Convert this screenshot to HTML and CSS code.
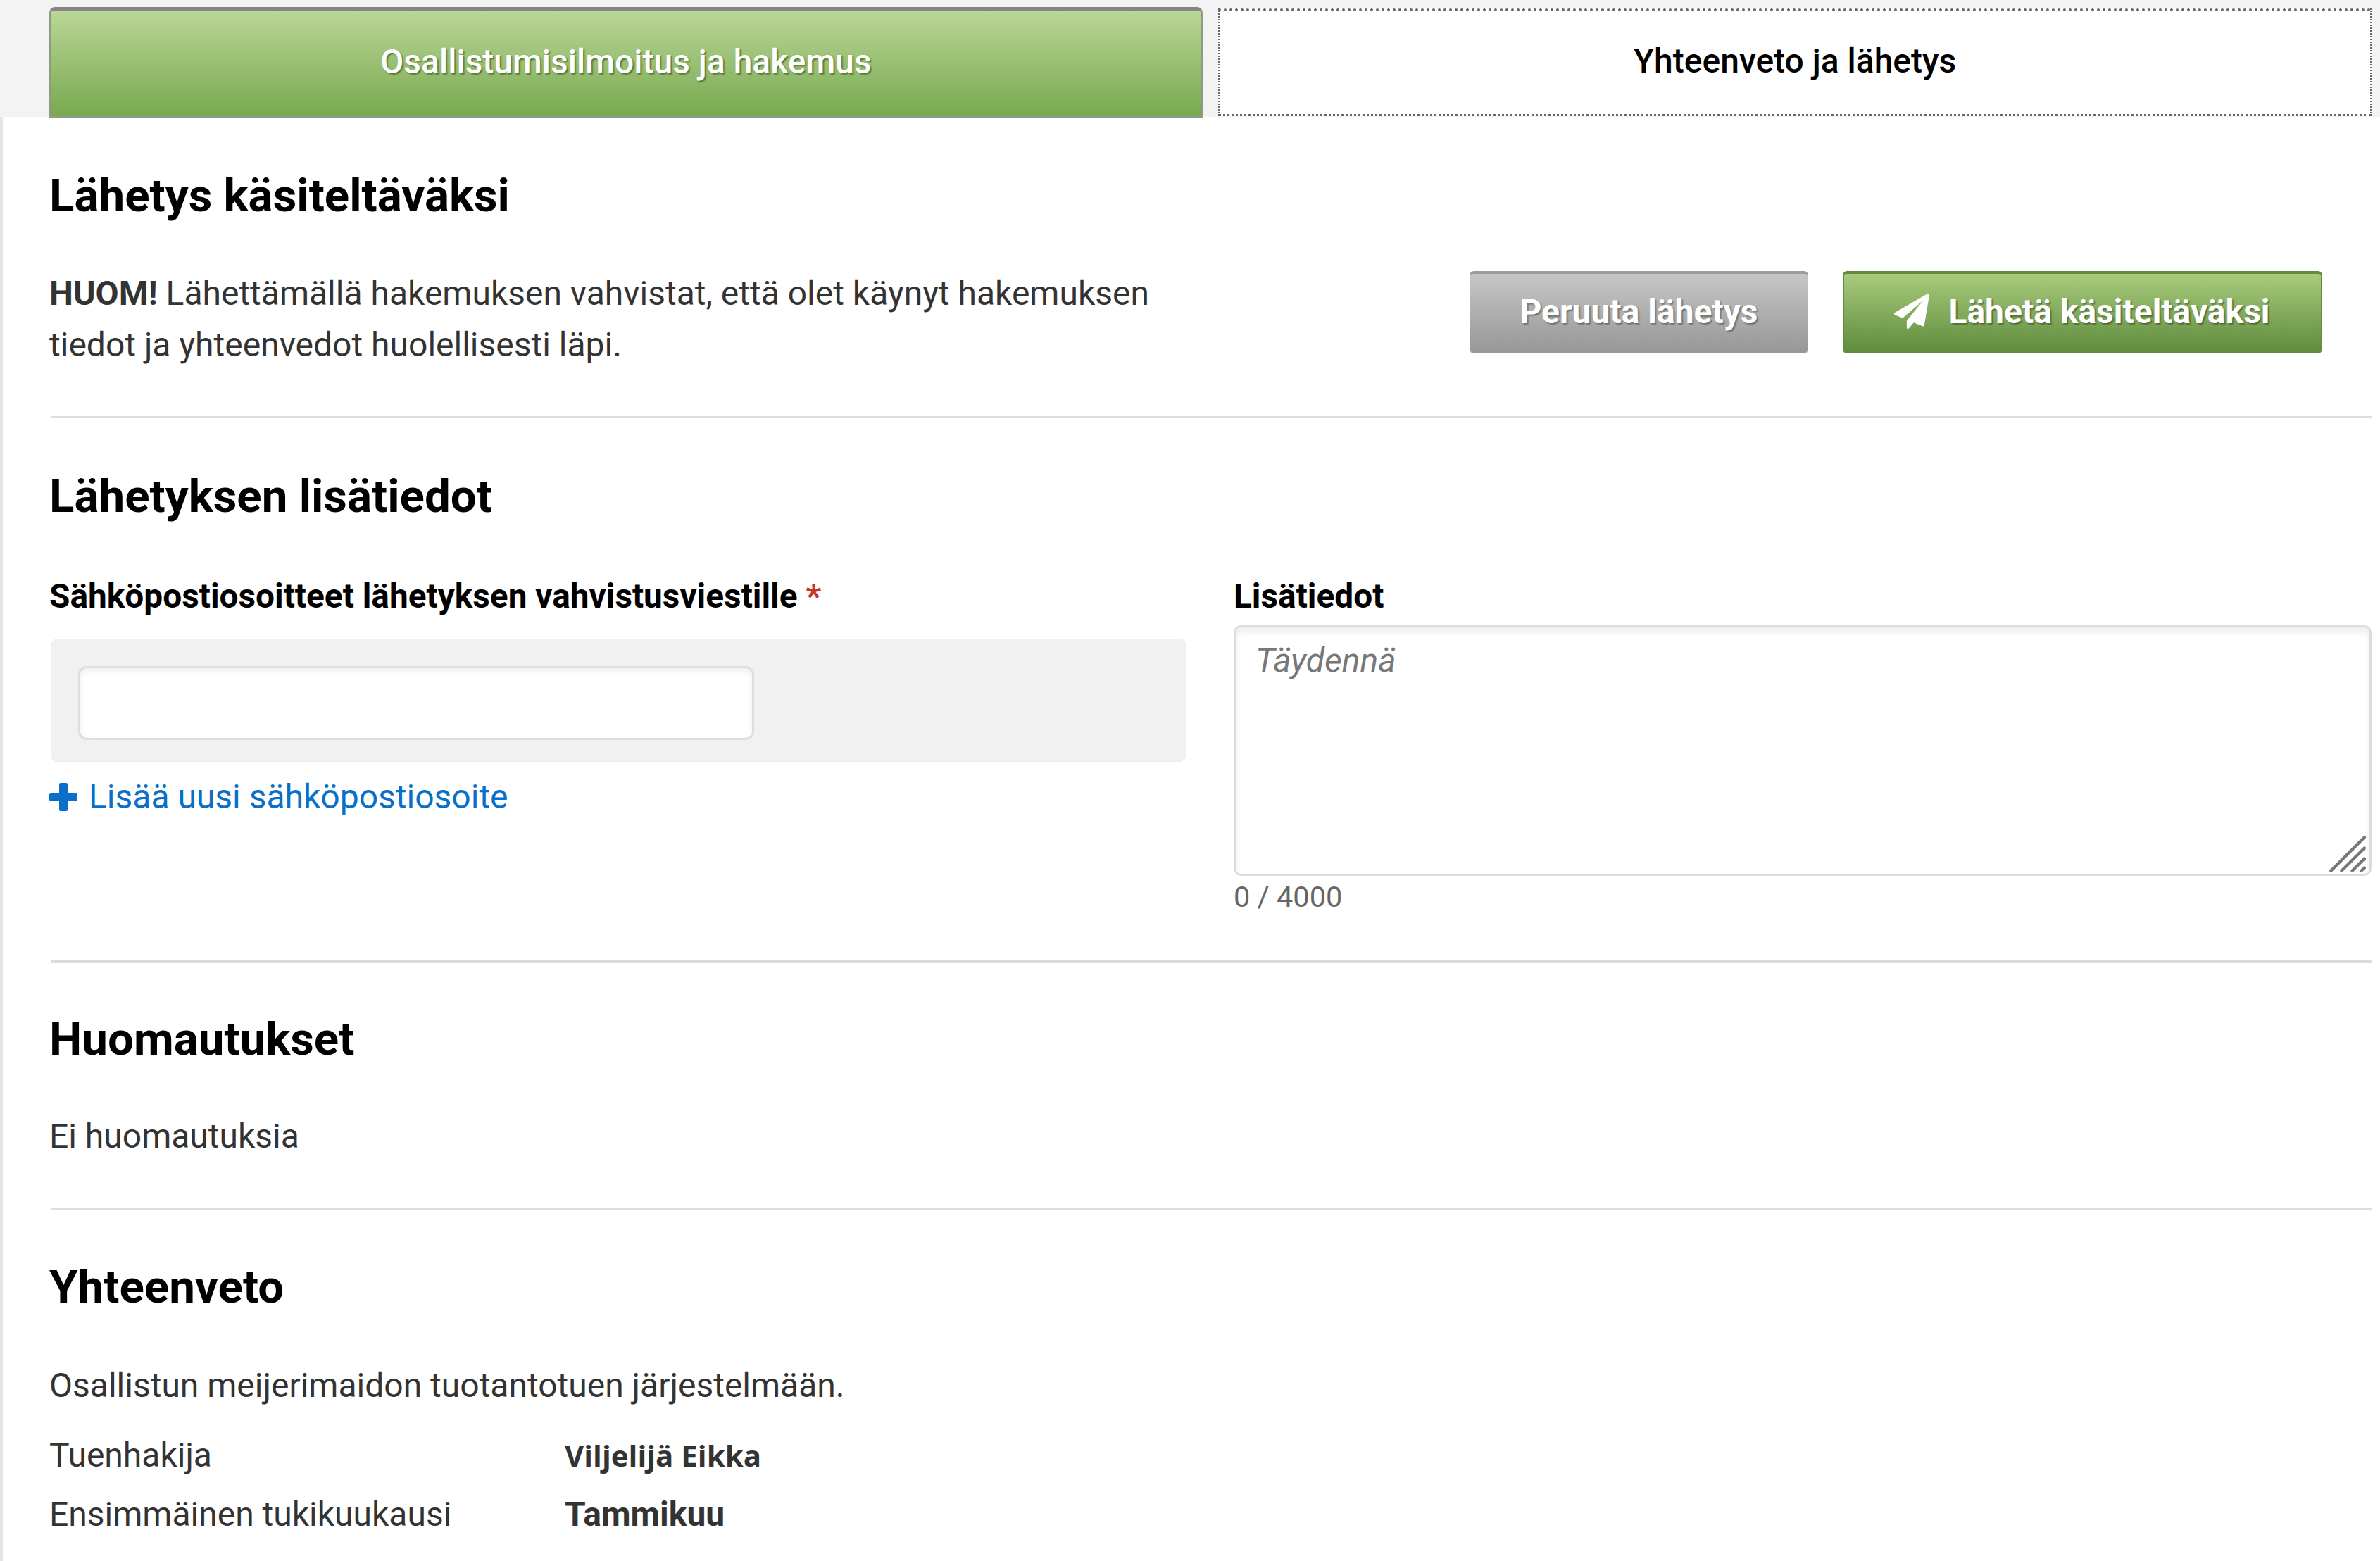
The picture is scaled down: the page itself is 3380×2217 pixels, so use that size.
FILE: index.html
```html
<!DOCTYPE html>
<html lang="fi">
<head>
<meta charset="utf-8">
<title>Lähetys käsiteltäväksi</title>
<link rel="stylesheet" href="styles.css">
</head>
<body>
<nav class="tabs">
  <a class="tab tab-active">Osallistumisilmoitus ja hakemus</a>
  <a class="tab tab-current">Yhteenveto ja lähetys</a>
</nav>
<main class="main">
  <section class="section section-send">
    <h2 class="heading">Lähetys käsiteltäväksi</h2>
    <div class="send-row">
      <p class="send-text"><strong>HUOM!</strong> Lähettämällä hakemuksen vahvistat, että olet käynyt hakemuksen tiedot ja yhteenvedot huolellisesti läpi.</p>
      <div class="actions">
        <button class="btn btn-grey" type="button">Peruuta lähetys</button>
        <button class="btn btn-green" type="button">
          <svg class="plane" viewBox="0 0 1792 1792" aria-hidden="true"><path d="M1764 11q33 24 27 64l-256 1536q-5 29-32 45-14 8-31 8-11 0-24-5l-453-185-242 295q-18 23-49 23-13 0-22-4-19-7-30.500-23.500t-11.500-36.500v-349l864-1059-1069 925-395-162q-37-14-40-55-2-40 32-59l1664-960q15-9 32-9 20 0 36 11z"/></svg>
          Lähetä käsiteltäväksi
        </button>
      </div>
    </div>
  </section>
  <section class="section section-info">
    <h2 class="heading">Lähetyksen lisätiedot</h2>
    <div class="form-grid">
      <div class="field">
        <label class="label label-left">Sähköpostiosoitteet lähetyksen vahvistusviestille <span class="req">*</span></label>
        <div class="panel"><input class="input" type="text"></div>
        <a class="add-link">
          <svg class="plus" viewBox="0 0 40 40" aria-hidden="true"><path d="M14 2a2 2 0 0 1 2-2h8a2 2 0 0 1 2 2v12h12a2 2 0 0 1 2 2v8a2 2 0 0 1-2 2H26v12a2 2 0 0 1-2 2h-8a2 2 0 0 1-2-2V26H2a2 2 0 0 1-2-2v-8a2 2 0 0 1 2-2h12z"/></svg>
          Lisää uusi sähköpostiosoite
        </a>
      </div>
      <div class="field">
        <label class="label label-right">Lisätiedot</label>
        <div class="area-wrap">
          <textarea class="area" placeholder="Täydennä"></textarea>
          <svg class="grip" viewBox="0 0 50 50" aria-hidden="true"><path d="M4 48 48 4M18 48 48 18M32 48 48 32M44 48l4-4"/></svg>
        </div>
        <div class="counter">0 / 4000</div>
      </div>
    </div>
  </section>
  <section class="section section-notes">
    <h2 class="heading">Huomautukset</h2>
    <p class="text notes-text">Ei huomautuksia</p>
  </section>
  <section class="section section-summary">
    <h2 class="heading">Yhteenveto</h2>
    <p class="text summary-text">Osallistun meijerimaidon tuotantotuen järjestelmään.</p>
    <dl class="facts">
      <dt class="text">Tuenhakija</dt><dd class="value value-alt">Viljelijä Eikka</dd>
      <dt class="text">Ensimmäinen tukikuukausi</dt><dd class="value">Tammikuu</dd>
    </dl>
  </section>
</main>
</body>
</html>
```
FILE: styles.css
```css
* { box-sizing: border-box; }
html, body { margin: 0; padding: 0; }
body {
  background: #f3f3f3;
  color: #333;
  font-family: Roboto, "Liberation Sans", sans-serif;
  font-size: 48px;
}
.tabs {
  display: flex;
  gap: 22px;
  height: 168px;
  padding: 10px 12px 0 70px;
}
.tab {
  flex: 1;
  display: flex;
  align-items: center;
  justify-content: center;
  padding-bottom: 5px;
  font-size: 48px;
  font-weight: 500;
}
.tab-active {
  color: #fff;
  background: linear-gradient(#bad697, #78a94f);
  border: 2px solid #8f9a85;
  border-top: 5px solid #858585;
  border-bottom: 3px solid #909a88;
  border-radius: 8px 8px 0 0;
  text-shadow: 2px 2px 2px rgba(60, 90, 30, .7);
}
.tab-current {
  color: #000;
  background: #fff;
  border: 3px dotted #666;
  border-width: 4px 2px 3px;
  margin: 2px 0 3px;
}
.main {
  background: #fff;
  border-left: 4px solid #e4e4e4;
  margin-top: -2px;
  padding-left: 68px;
  padding-right: 12px;
  height: 2051px;
  overflow: hidden;
}
.section { border-bottom: 3px solid #dcdcdc; }
.section:last-child { border-bottom: 0; }
.section-send { padding: 77px 0 65px; }
.section-info { padding: 76px 0 65px; }
.section-notes { padding: 74px 0 72px; }
.section-summary { padding: 74px 0 0; }
.heading {
  margin: 0 0 0 -2px;
  color: #000;
  font-size: 65.5px;
  line-height: 70px;
  font-weight: 700;
}
.send-row {
  display: flex;
  justify-content: space-between;
  margin: 67px 0 0 -2px;
}
.send-text {
  margin: 0;
  width: 1640px;
  font-size: 48px;
  line-height: 73px;
}
.actions {
  display: flex;
  gap: 49px;
  margin: 5px 70px 0 0;
}
.btn {
  display: flex;
  align-items: center;
  justify-content: center;
  height: 117px;
  color: #fff;
  font-family: inherit;
  font-size: 48px;
  font-weight: 700;
  border-radius: 6px;
  text-shadow: 2px 2px 2px rgba(0, 0, 0, .35);
  padding: 0 0 5px;
}
.btn-grey {
  width: 481px;
  background: linear-gradient(#c6c6c6, #979797);
  border: 1px solid #b5b5b5;
  border-top: 4px solid #9c9c9c;
}
.btn-green {
  width: 681px;
  gap: 26px;
  padding-right: 2px;
  background: linear-gradient(#a8ca7c, #5f8c3d);
  border: 2px solid #5f8c3d;
  border-top: 4px solid #5f8c3d;
}
.plane { width: 52px; height: 50px; fill: #fff; }
.form-grid {
  display: grid;
  grid-template-columns: 1613px 1fr;
  column-gap: 67px;
  margin-top: 77px;
}
.field { display: flex; flex-direction: column; align-items: stretch; }
.label {
  color: #000;
  font-size: 47.8px;
  font-weight: 700;
  line-height: 60px;
}
.label-left { margin: 0 0 30px -2px; }
.label-right { margin-bottom: 11px; }
.req { color: #c8322d; }
.panel {
  height: 175px;
  padding: 38px 38px;
  background: #f1f1f1;
  border: 1px solid #ececec;
  border-radius: 10px;
}
.input {
  display: block;
  width: 960px;
  height: 105px;
  background: #fff;
  border: 3px solid #dedede;
  border-radius: 12px;
  box-shadow: inset 0 4px 8px rgba(0, 0, 0, .07);
  outline: 0;
}
.add-link {
  display: flex;
  align-items: center;
  gap: 16px;
  margin: 20px 0 0 -2px;
  color: #0a6fc9;
  font-size: 48px;
  line-height: 60px;
}
.plus { width: 40px; height: 40px; fill: #0a6fc9; }
.area-wrap { position: relative; height: 356px; }
.area {
  display: block;
  width: 100%;
  height: 100%;
  padding: 17px 28px;
  resize: none;
  background: #fff;
  border: 3px solid #dcdcdc;
  border-radius: 10px;
  box-shadow: inset 0 6px 10px rgba(0, 0, 0, .08);
  font-family: inherit;
  font-size: 48px;
  line-height: 60px;
  outline: 0;
}
.area::placeholder { color: #777; font-style: italic; opacity: 1; }
.grip {
  position: absolute;
  right: 8px;
  bottom: 5px;
  width: 54px;
  height: 54px;
  fill: none;
  stroke: #777;
  stroke-width: 4;
  stroke-linecap: round;
}
.counter {
  margin-top: 5px;
  color: #666;
  font-size: 41.5px;
  line-height: 50px;
}
.text {
  margin: 0;
  color: #333;
  font-size: 48px;
  line-height: 60px;
}
.notes-text { margin: 73px 0 0 -2px; }
.summary-text { margin: 75px 0 0 -2px; }
.facts {
  display: grid;
  grid-template-columns: 732px 1fr;
  row-gap: 24px;
  margin: 39px 0 0 -2px;
}
.value {
  margin: 0;
  color: #333;
  font-size: 48px;
  font-weight: 700;
  line-height: 60px;
}
.value-alt { font-family: "Open Sans", sans-serif; font-size: 42px; }
```
